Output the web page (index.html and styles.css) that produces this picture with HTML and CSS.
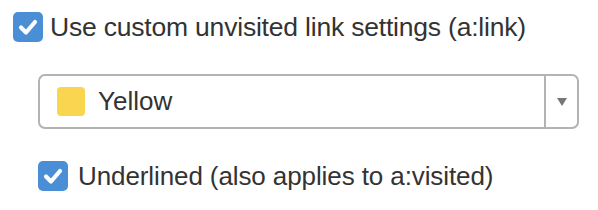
FILE: index.html
```html
<!DOCTYPE html>
<html lang="en">
<head>
  <meta charset="UTF-8" />
  <title>Link settings</title>
  <link rel="stylesheet" href="styles.css">
</head>
<body>
  <div class="panel">
    <label class="check-row">
      <span class="check">
        <svg viewBox="0 0 30 30" width="30" height="30"><path d="M8 15.5 L13 20.5 L22 10" fill="none" stroke="#fff" stroke-width="4.2" stroke-linecap="round" stroke-linejoin="round"/></svg>
      </span>
      <span class="label">Use custom unvisited link settings (a:link)</span>
    </label>

    <div class="sub">
      <div class="select">
        <div class="select-value">
          <span class="swatch"></span>
          <span class="select-text">Yellow</span>
        </div>
        <div class="select-arrow"><span class="tri"></span></div>
      </div>

      <label class="check-row small">
        <span class="check">
          <svg viewBox="0 0 30 30" width="30" height="30"><path d="M8 15.5 L13 20.5 L22 10" fill="none" stroke="#fff" stroke-width="4.2" stroke-linecap="round" stroke-linejoin="round"/></svg>
        </span>
        <span class="label">Underlined (also applies to a:visited)</span>
      </label>
    </div>
  </div>
</body>
</html>
```
FILE: styles.css
```css
body {
  margin: 0;
  background: #fff;
  font-family: "Liberation Sans", Arial, sans-serif;
  color: #333;
}
.panel {
  padding: 12px 0 0 13px;
}
.check-row {
  display: flex;
  align-items: center;
  height: 30px;
}
.check {
  width: 30px;
  height: 30px;
  border-radius: 5px;
  background: #4a8fd6;
  display: flex;
  flex: none;
}
.label {
  margin-left: 7px;
  font-size: 26.5px;
  letter-spacing: -0.2px;
}
.sub {
  padding-left: 25px;
}
.select {
  margin-top: 32px;
  width: 541px;
  height: 55px;
  box-sizing: border-box;
  border: 2px solid #b3b3b3;
  border-radius: 7px;
  display: flex;
}
.select-value {
  flex: 1;
  display: flex;
  align-items: center;
  padding-left: 17px;
}
.swatch {
  width: 28px;
  height: 29px;
  border-radius: 4px;
  background: #f9d550;
}
.select-text {
  margin-left: 13px;
  font-size: 26px;
}
.select-arrow {
  width: 31px;
  border-left: 2px solid #b3b3b3;
  display: flex;
  align-items: center;
  justify-content: center;
}
.tri {
  width: 0;
  height: 0;
  border-left: 5px solid transparent;
  border-right: 5px solid transparent;
  border-top: 8px solid #777;
}
.check-row.small {
  margin-top: 32px;
}
.check-row.small .label {
  margin-left: 10px;
  font-size: 26px;
  letter-spacing: -0.1px;
}
```
